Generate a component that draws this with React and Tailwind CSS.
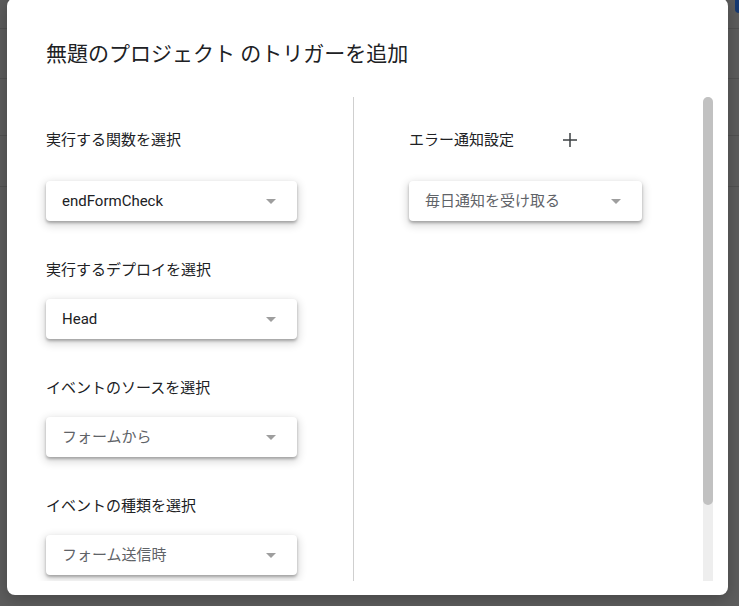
const font = { fontFamily: "Roboto, 'Noto Sans CJK JP', sans-serif" }

function Arrow() {
  return (
    <svg width="10" height="5" viewBox="0 0 10 5" className="shrink-0">
      <polygon points="0,0 10,0 5,5" fill="#9e9e9e" />
    </svg>
  )
}

function Select({ value, muted, width = 'w-[251px]' }) {
  return (
    <div className={`${width} h-[40px] rounded-[4px] bg-white flex items-center justify-between pl-[16px] pr-[21px] shadow-[0_2px_3px_0_rgba(0,0,0,0.28),0_3px_9px_2px_rgba(0,0,0,0.14)]`}>
      <span className={`text-[15px] leading-[20px] ${muted ? 'text-[#5f6368]' : 'text-[#202124]'}`}>{value}</span>
      <Arrow />
    </div>
  )
}

function Field({ label, value, muted }) {
  return (
    <div className="mt-[39px]">
      <div className="text-[15px] leading-[20px] text-[#202124]">{label}</div>
      <div className="mt-[19px]">
        <Select value={value} muted={muted} />
      </div>
    </div>
  )
}

export default function App() {
  return (
    <div className="relative w-full h-[606px] overflow-hidden bg-[#5d5d5d]" style={font}>
      {/* page behind the dialog */}
      <div className="h-[29px] border-b border-[#525252]" />
      <div className="h-[50px] border-b border-[#525252]" />
      <div className="h-[57px] border-b border-[#525252]" />
      <div className="h-[51px] border-b border-[#525252]" />
      <div className="absolute left-[735px] top-[-10px] w-[20px] h-[23px] rounded-[4px] bg-[#173a72]" />

      <div className="absolute left-[7px] top-[-2px] w-[721px] h-[597px] rounded-[8px] bg-white flex flex-col shadow-[0_4px_16px_rgba(0,0,0,0.25)]">
        <h2 className="pl-[39px] pt-[42px] text-[21px] leading-[28px] text-[#202124] font-normal">
          無題のプロジェクト のトリガーを追加
        </h2>

        <div className="mt-[29px] h-[484px] flex overflow-hidden">
          <div className="w-[346px] pl-[39px] pt-[23px] shrink-0">
            <div className="h-[40px] flex items-center text-[15px] text-[#202124]">実行する関数を選択</div>
            <div className="mt-[21px]">
              <Select value="endFormCheck" />
            </div>
            <Field label="実行するデプロイを選択" value="Head" />
            <Field label="イベントのソースを選択" value="フォームから" muted />
            <Field label="イベントの種類を選択" value="フォーム送信時" muted />
          </div>

          <div className="w-px bg-[#cfcfcf] shrink-0" />

          <div className="flex-1 pl-[55px] pt-[23px]">
            <div className="h-[40px] flex items-center">
              <span className="text-[15px] text-[#202124]">エラー通知設定</span>
              <button className="ml-[44px] w-[24px] h-[24px] flex items-center justify-center">
                <svg width="24" height="24" viewBox="0 0 24 24">
                  <path d="M19 12.75h-6.25V19h-1.5v-6.25H5v-1.5h6.25V5h1.5v6.25H19z" fill="#3c4043" />
                </svg>
              </button>
            </div>
            <div className="mt-[21px]">
              <Select value="毎日通知を受け取る" muted width="w-[233px]" />
            </div>
          </div>

          <div className="w-[10px] mr-[15px] shrink-0 bg-[#eeeeee] rounded-t-[5px]">
            <div className="h-[408px] rounded-full bg-[#c1c1c1]" />
          </div>
        </div>
      </div>
    </div>
  )
}
